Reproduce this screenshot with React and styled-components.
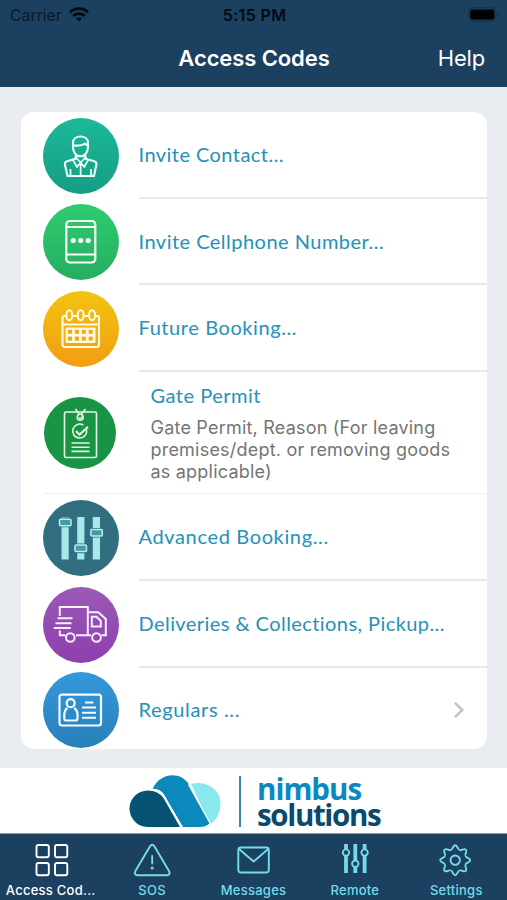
import React from 'react'
import styled, { createGlobalStyle } from 'styled-components'

const items = [
  { title: 'Invite Contact...', from: '#1bb99a', to: '#169d83', icon: ContactIcon, height: 87, spacing: 0.45 },
  { title: 'Invite Cellphone Number...', from: '#2ecc70', to: '#27ad60', icon: PhoneIcon, height: 86, spacing: 0.48 },
  { title: 'Future Booking...', from: '#f1c40f', to: '#f39c12', icon: CalendarIcon, height: 87, spacing: 0.58 },
  {
    title: 'Gate Permit',
    text: 'Gate Permit, Reason (For leaving premises/dept. or removing goods as applicable)',
    from: '#199444', to: '#199444', icon: PermitIcon, height: 122, spacing: 0.5,
  },
  { title: 'Advanced Booking...', from: '#316f80', to: '#316f80', icon: SlidersIcon, height: 87, spacing: 0.64 },
  { title: 'Deliveries & Collections, Pickup...', from: '#9b59b6', to: '#8e3fad', icon: TruckIcon, height: 87, spacing: 0.43 },
  { title: 'Regulars ...', from: '#3498db', to: '#2980b9', icon: CardIcon, height: 83, spacing: 0.65, arrow: true },
]

export default function App() {
  return (
    <Screen>
      <GlobalStyle />
      <Header>
        <StatusBar>
          <Carrier>Carrier <Wifi /></Carrier>
          <Clock>5:15 PM</Clock>
          <Battery />
        </StatusBar>
        <NavBar>
          <NavTitle>Access Codes</NavTitle>
          <HelpButton>Help</HelpButton>
        </NavBar>
      </Header>
      <Main>
        <List>
          {items.map((item, i) => {
            const Icon = item.icon
            return (
              <Row key={item.title} $height={item.height} $divided={!!item.text}>
                <Round $from={item.from} $to={item.to} $small={!!item.text}><Icon /></Round>
                <RowBody $sub={!!item.text} $last={i === items.length - 1}>
                  <RowTitle $spacing={item.spacing}>{item.title}</RowTitle>
                  {item.text && <RowText>{item.text}</RowText>}
                  {item.arrow && <Chevron />}
                </RowBody>
              </Row>
            )
          })}
        </List>
      </Main>
      <Brand>
        <CloudLogo />
        <BrandLine />
        <BrandName>
          <BrandWord $color="#0b89bd" $spacing={-1}>nimbus</BrandWord>
          <BrandWord $color="#0a4a6c" $spacing={-1.35}>solutions</BrandWord>
        </BrandName>
      </Brand>
      <TabBar>
        <Tab $active><GridIcon />Access Cod...</Tab>
        <Tab><AlertIcon />SOS</Tab>
        <Tab><MailIcon />Messages</Tab>
        <Tab><RemoteIcon />Remote</Tab>
        <Tab><GearIcon />Settings</Tab>
      </TabBar>
    </Screen>
  )
}

// status bar icons

function Wifi() {
  return (
    <svg width="20" height="15" viewBox="0 0 20 15" fill="none" stroke="#030a10" strokeWidth="2.9">
      <path d="M1 5.200C6 .4 14 .4 19 5.200" />
      <path d="M4.300 8.900c3.300-3 8.100-3 11.400 0" />
      <path d="M10 14.600l-3-3c1.700-1.600 4.300-1.600 6 0z" fill="#030a10" stroke="none" />
    </svg>
  )
}

function Battery() {
  return (
    <svg width="33" height="15" viewBox="0 0 33 15">
      <rect x=".7" y=".7" width="27" height="13.400" rx="4" fill="none" stroke="#14324b" strokeWidth="1.200" />
      <rect x="2.200" y="2.600" width="24" height="9.800" rx="2" fill="#000" />
      <path d="M29.500 5v5c1.900-.6 1.900-4.400 0-5z" fill="#14324b" />
    </svg>
  )
}

// list icons, drawn over the full circle

function ContactIcon() {
  return (
    <svg width="76" height="76" viewBox="0 0 76 76" fill="none" stroke="#f2fffb" strokeWidth="2.100" strokeLinejoin="round">
      <path d="M30 27v-2.500c0-8 15-8 15 0V29c0 5-3 9.300-7.500 9.300S30 34 30 29z" />
      <path d="M30 27.500c5 .4 9.500 0 12-2 1 1.300 1.700 1.700 3 2" />
      <path d="M32.800 37.500v3.200l-8.800 2.500c-1.600.5-2.300 1.700-2.100 3.300L24.500 58H51l2.400-11.500c.2-1.600-.5-2.800-2.100-3.300l-8.800-2.500v-3.200" />
      <path d="M32.800 39.500l-2.800 2.500 4 7 3.600-4.600 3.600 4.600 4-7-2.700-2.500-4.900 5zM37.600 45v13M27.500 51v7M48 51v7" strokeWidth="1.700" />
    </svg>
  )
}

function PhoneIcon() {
  return (
    <svg width="76" height="76" viewBox="0 0 76 76" fill="none" stroke="#f4fff8" strokeWidth="2.200">
      <rect x="23.300" y="17" width="29" height="41.500" rx="3.500" />
      <path d="M23.500 23h29M23.500 50.500h29" />
      <g fill="#f4fff8" stroke="none">
        <circle cx="30.200" cy="36.500" r="2.600" />
        <circle cx="37.700" cy="36.500" r="2.600" />
        <circle cx="45.200" cy="36.500" r="2.600" />
      </g>
    </svg>
  )
}

function CalendarIcon() {
  const cols = [25.500, 32.400, 39.300, 46.200]
  return (
    <svg width="76" height="76" viewBox="-.5 -.5 76 76" transform="translate(-1 -1)" fill="none" stroke="#fffadf" strokeWidth="2.100">
      <path d="M23.500 25.500h-1.500q-2 0-2 2v26.500q0 2.500 2.500 2.500h31.500q2.500 0 2.500-2.500V27.500q0-2-2-2h-1.500M30 25.500h4.800M41.500 25.500h4.800M20 34h36.500" />
      <ellipse cx="26.800" cy="24.700" rx="3" ry="5" />
      <ellipse cx="38.200" cy="24.700" rx="3" ry="5" />
      <ellipse cx="49.600" cy="24.700" rx="3" ry="5" />
      <rect x="23" y="37" width="30" height="15.500" rx="1" fill="#fffadf" stroke="none" />
      {cols.map(x => (
        <g key={x} fill="#f1a912" stroke="none">
          <rect x={x} y="39.300" width="4" height="4" />
          <rect x={x} y="46.100" width="4" height="4" />
        </g>
      ))}
    </svg>
  )
}

function PermitIcon() {
  return (
    <svg width="72" height="72" viewBox="0 0 72 72" fill="none" stroke="#e2f8df" strokeWidth="1.600">
      <rect x="20.500" y="15" width="32" height="45.500" rx="1.500" />
      <circle cx="36.200" cy="20.200" r="3" />
      <path d="M31.500 12l3.700 5.500M41.500 12l-4.500 5.500M34.500 20.500q2 2 4-1" />
      <path d="M42.500 32.500a7 7 0 1 1-3-4.300" />
      <path d="M32 34l3.500 3.700 8.500-8" strokeWidth="2.200" />
      <path d="M27.500 46h18M27.500 50.200h18M27.500 54.400h18" />
    </svg>
  )
}

function SlidersIcon() {
  return (
    <svg width="76" height="76" viewBox="0.500 0.500 76 76" fill="#a8e8ea">
      <path d="M19 17.500h7.200V60H19zM34.700 17.500h7.200V60h-7.200zM50.300 17.500h7.200V60h-7.200z" />
      <g fill="#429da1" stroke="#316f80" strokeWidth="3.200">
        <rect x="17" y="19.700" width="11.500" height="6.500" rx="1" />
        <rect x="32.500" y="45.600" width="11.500" height="6.500" rx="1" />
        <rect x="48.300" y="30" width="11.500" height="6.500" rx="1" />
      </g>
      <g fill="#429da1" stroke="#b5eff0" strokeWidth="1.500">
        <rect x="17" y="19.700" width="11.500" height="6.500" rx="1" />
        <rect x="32.500" y="45.600" width="11.500" height="6.500" rx="1" />
        <rect x="48.300" y="30" width="11.500" height="6.500" rx="1" />
      </g>
    </svg>
  )
}

function TruckIcon() {
  return (
    <svg width="76" height="76" viewBox="0.500 0.500 76 76" fill="none" stroke="#fbeeff" strokeWidth="2">
      <path d="M17.300 29.500v-9h28v28.300M17.300 44v4.800h5.500M33.500 48.800h15" />
      <path d="M45.300 25.800h10.500l7.500 6.700v16.300H59" />
      <path d="M49.300 30.300h4.700l4.300 4.200v5.500h-9z" />
      <circle cx="27.800" cy="51" r="4.300" />
      <circle cx="54" cy="51" r="4.300" />
      <path d="M15 31.800h15M13 36.700h16M11.300 41.500h17" />
    </svg>
  )
}

function CardIcon() {
  return (
    <svg width="76" height="76" viewBox="0.500 0 76 76" fill="none" stroke="#f4fbff" strokeWidth="2.200">
      <rect x="17" y="22.700" width="41.500" height="30.800" rx="2.500" />
      <circle cx="28.200" cy="31.200" r="4" />
      <path d="M25 36c-2.500 1.500-3.200 4-3.200 7.500v3q0 2 2 2h9.200q2 0 2-2v-3c0-3.500-.7-6-3.300-7.500" />
      <path d="M42.500 30.500h8.500M39.500 35.500h14M39.500 40.700h14M39.500 45.800h14" strokeWidth="1.900" />
    </svg>
  )
}

function CloudLogo() {
  return (
    <svg width="93" height="53" viewBox="0 0 93 53">
      <path d="M62 9c14-4 29.500 5 29.500 19.500 0 9-4 17-10.500 20.500z" fill="#89e8ee" />
      <path d="M23.500 14C31-3 52-4 60 9.500L81 48q-4 4-10 4H54L35 20q-4-6-11.500-6z" fill="#0b89bd" />
      <path d="M19 15.500C8 15.500 .5 24 .5 33.500S8 52 18.500 52H51L34.500 23Q29 15.500 19 15.500z" fill="#055273" />
      <path d="M24 14.500q7.500 0 11.500 7L53 52.500M59.500 9.500L81.500 49" fill="none" stroke="#fff" strokeWidth="1.300" />
    </svg>
  )
}

function Chevron() {
  return (
    <Arrow width="12" height="18" viewBox="0 0 12 18" fill="none" stroke="#bfbfc2" strokeWidth="2.400">
      <path d="M2 1.800L9.300 9 2 16.200" />
    </Arrow>
  )
}

// tab icons

function GridIcon() {
  return (
    <svg width="40" height="36" viewBox="0 0 40 36" fill="none" stroke="currentColor" strokeWidth="1.900">
      <rect x="5.500" y="3" width="12.300" height="12.300" rx="2" />
      <rect x="24" y="3" width="12.300" height="12.300" rx="2" />
      <rect x="5.500" y="21" width="12.300" height="12.300" rx="2" />
      <rect x="24" y="21" width="12.300" height="12.300" rx="2" />
    </svg>
  )
}

function AlertIcon() {
  return (
    <svg width="40" height="36" viewBox="0 0 40 36" fill="none" stroke="currentColor" strokeWidth="1.900" strokeLinecap="round">
      <path d="M17.900 4.500L3.400 29c-1.300 2.300-.2 4.200 2 4.200h29.600c2.200 0 3.300-1.900 2-4.200L22.500 4.500q-2.300-3.500-4.600 0zM20.200 14v7.500" />
      <circle cx="20.200" cy="26" r=".6" />
    </svg>
  )
}

function MailIcon() {
  return (
    <svg width="40" height="36" viewBox="0 0 40 36" fill="none" stroke="currentColor" strokeWidth="1.900" strokeLinejoin="round">
      <rect x="5.300" y="5.500" width="30.500" height="25" rx="2.500" />
      <path d="M6 7L20.600 19.500 35.200 7" />
    </svg>
  )
}

function RemoteIcon() {
  return (
    <svg width="40" height="36" viewBox="0 0 40 36" fill="none" stroke="currentColor" strokeWidth="3.800">
      <path d="M11 2V7M11 13.500v17.500M20.300 2v16.500M20.300 25v6M29.600 2V7M29.600 13.500v17.500" />
      <g strokeWidth="1.900">
        <circle cx="11" cy="10.600" r="3.200" />
        <circle cx="20.300" cy="21.800" r="3.200" />
        <circle cx="29.600" cy="10.600" r="3.200" />
      </g>
    </svg>
  )
}

function GearIcon() {
  // eight rounded teeth around the hub
  const teeth = [0, 45, 90, 135, 180, 225, 270, 315]
  return (
    <svg width="40" height="36" viewBox="0 0 40 36" fill="none" stroke="currentColor" strokeWidth="1.900">
      <g transform="translate(19.200 18.200)">
        <circle r="4.700" />
        {teeth.map(a => (
          <path key={a} transform={`rotate(${a})`} d="M-4.400 -10.600C-2.200 -10.200 -2.700 -15 0 -15S2.200 -10.200 4.400 -10.600" />
        ))}
      </g>
    </svg>
  )
}

const GlobalStyle = createGlobalStyle`
  * {
    box-sizing: border-box;
  }
  body {
    margin: 0;
    font-family: Inter, "Liberation Sans", sans-serif;
  }
`;
const Screen = styled.div`
  display: flex;
  flex-direction: column;
  width: 507px;
  height: 900px;
  overflow: hidden;
  background: #e9edf1;
`;
const Header = styled.header`
  height: 87px;
  background: #1b4060;
`;
const StatusBar = styled.div`
  display: grid;
  grid-template-columns: 1fr auto 1fr;
  align-items: center;
  height: 29px;
  padding: 0 6px 0 10px;
  color: #030a10;
  font-size: 16px;

  & > svg {
    justify-self: end;
    margin-top: -1px;
  }
`;
const Carrier = styled.span`
  display: flex;
  align-items: center;
  gap: 7px;
  color: #0a1b2a;
  letter-spacing: -0.1px;
`;
const Clock = styled.span`
  margin-right: 2px;
  font-weight: 600;
  letter-spacing: 0.35px;
`;
const NavBar = styled.div`
  display: grid;
  grid-template-columns: 1fr auto 1fr;
  align-items: center;
  height: 57px;
  padding: 0 22px 0 23px;
  color: #fff;
`;
const NavTitle = styled.h1`
  grid-column: 2;
  margin: 0;
  font-size: 22px;
  font-weight: 600;
  letter-spacing: -0.1px;
`;
const HelpButton = styled.button`
  justify-self: end;
  padding: 0;
  border: 0;
  background: none;
  color: #fff;
  font: 400 22px Inter, sans-serif;
  letter-spacing: -0.2px;
`;
const Main = styled.main`
  height: 681px;
  padding: 25px 20px 0 21px;
`;
const List = styled.section`
  height: 637px;
  border-radius: 13px;
  background: #fff;
  overflow: hidden;
`;
const Row = styled.div`
  display: flex;
  align-items: center;
  height: ${p => p.$height}px;
  padding-left: 21.500px;

  /* the permit row has one thin line that also runs below its icon */
  background: ${p => p.$divided ? 'linear-gradient(#eeeeef, #eeeeef) 23px 100% / 100% 1px no-repeat' : 'none'};
`;
const Round = styled.div`
  flex: none;
  width: ${p => p.$small ? 72 : 76}px;
  height: ${p => p.$small ? 72 : 76}px;
  margin: 0 ${p => p.$small ? 22.5 : 20}px 0 ${p => p.$small ? 1.5 : 0}px;
  border-radius: 50%;
  background: linear-gradient(${p => p.$from}, ${p => p.$to});

  & > svg {
    display: block;
  }
`;
const RowBody = styled.div`
  display: flex;
  flex: 1;
  flex-direction: ${p => p.$sub ? 'column' : 'row'};
  align-items: ${p => p.$sub ? 'flex-start' : 'center'};
  justify-content: ${p => p.$sub ? 'flex-start' : 'space-between'};
  height: 100%;
  padding-top: ${p => p.$sub ? 10 : 0}px;
  padding-left: ${p => p.$sub ? 12 : 0}px;
  padding-bottom: ${p => p.$sub ? 0 : 1}px;
  border-bottom: ${p => p.$last || p.$sub ? 0 : 2}px solid #e8e8ea;
`;
const RowTitle = styled.div`
  color: #2591b8;
  font-family: Lato, sans-serif;
  font-size: 20px;
  line-height: 26px;
  letter-spacing: ${p => p.$spacing}px;
  white-space: nowrap;
`;
const RowText = styled.p`
  width: 315px;
  margin: 8.500px 0 0;
  color: #757575;
  font-size: 18px;
  line-height: 22.300px;
  letter-spacing: 0.21px;
`;
const Arrow = styled.svg`
  margin: 2px 22px 0 0;
`;
const Brand = styled.div`
  display: flex;
  align-items: center;
  height: 65px;
  padding: 2px 0 0 129px;
  background: #fff;
`;
const BrandLine = styled.div`
  width: 2px;
  height: 51px;
  margin: 0 16px 0 17px;
  background: #3e86a9;
`;
const BrandName = styled.div`
  display: flex;
  flex-direction: column;
`;
const BrandWord = styled.span`
  color: ${p => p.$color};
  font: 700 29.500px/26px "Open Sans", sans-serif;
  letter-spacing: ${p => p.$spacing}px;
`;
const TabBar = styled.nav`
  display: grid;
  grid-template-columns: repeat(5, 1fr);
  height: 67px;
  border-top: 1px solid #8a9dac;
  background: #1b4060;
`;
const Tab = styled.a`
  display: flex;
  flex-direction: column;
  align-items: center;
  padding-top: 8px;
  color: ${p => p.$active ? '#fff' : '#76dbe8'};
  font-size: 13px;
  font-weight: 500;
  line-height: 24px;
  letter-spacing: 0.25px;
  white-space: nowrap;
`;
